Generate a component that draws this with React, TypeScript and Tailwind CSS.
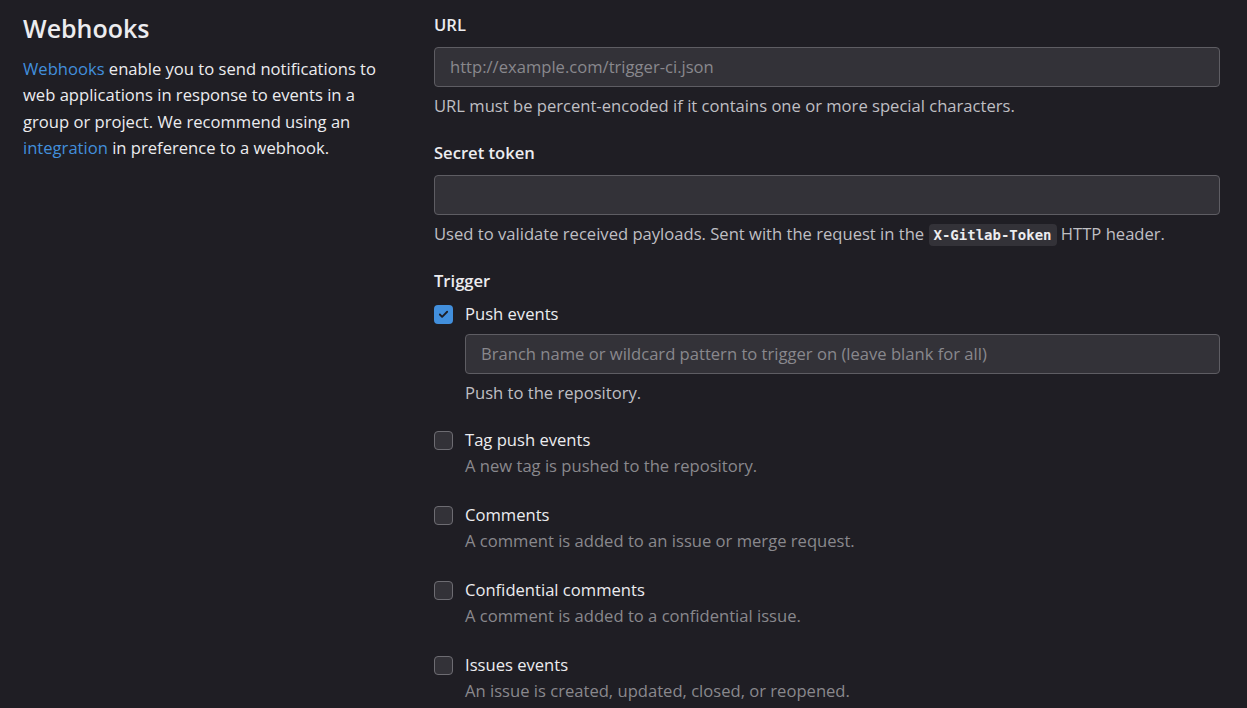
import { Check } from "lucide-react";

const events = [
  { label: "Tag push events", help: "A new tag is pushed to the repository." },
  { label: "Comments", help: "A comment is added to an issue or merge request." },
  { label: "Confidential comments", help: "A comment is added to a confidential issue." },
  { label: "Issues events", help: "An issue is created, updated, closed, or reopened." },
];

function Box({ checked }: { checked?: boolean }) {
  if (checked) {
    return (
      <span className="flex h-[19px] w-[19px] shrink-0 items-center justify-center rounded-[4px] bg-[#428fdc]">
        <Check size={11} strokeWidth={4} className="text-[#1f1e24]" />
      </span>
    );
  }
  return <span className="h-[19px] w-[19px] shrink-0 rounded-[4px] border border-[#6d6c72] bg-[#333238]" />;
}

export default function App() {
  return (
    <div
      className="flex min-h-[708px] bg-[#1f1e24] text-[16.6px] text-[#ececef]"
      style={{ fontFamily: '"Open Sans", sans-serif' }}
    >
      <div className="w-[434px] shrink-0 pl-[23px] pr-[46px] pt-[12px]">
        <h2 className="text-[25px] font-semibold leading-[32px]">Webhooks</h2>
        <p className="mt-[12px] leading-[26.4px]">
          <a className="text-[#428fdc]">Webhooks</a> enable you to send notifications to web applications in response
          to events in a group or project. We recommend using an <a className="text-[#428fdc]">integration</a> in
          preference to a webhook.
        </p>
      </div>

      <div className="mr-[27px] flex-1 pt-[12px]">
        <label className="block font-semibold leading-[26px]">URL</label>
        <div className="mt-[9px] flex h-[40px] items-center rounded-[4px] border border-[#5e5d63] bg-[#333238] px-[15px] text-[#89888d]">
          http://example.com/trigger-ci.json
        </div>
        <p className="mt-[6px] leading-[26px] text-[#bfbfc3]">
          URL must be percent-encoded if it contains one or more special characters.
        </p>

        <label className="mt-[21px] block font-semibold leading-[26px]">Secret token</label>
        <div className="mt-[9px] h-[40px] rounded-[4px] border border-[#5e5d63] bg-[#333238]" />
        <p className="mt-[6px] leading-[26px] text-[#bfbfc3]">
          Used to validate received payloads. Sent with the request in the{" "}
          <code
            className="rounded-[4px] bg-[#333238] px-[5px] py-[3px] text-[14px] font-semibold text-[#ececef]"
            style={{ fontFamily: '"DejaVu Sans Mono", monospace' }}
          >
            X-Gitlab-Token
          </code>{" "}
          HTTP header.
        </p>

        <label className="mt-[20px] block font-semibold leading-[26px]">Trigger</label>
        <div className="mt-[7px] flex items-center gap-[12px]">
          <Box checked />
          <span className="leading-[26px]">Push events</span>
        </div>
        <div className="ml-[31px]">
          <div className="mt-[7px] flex h-[40px] items-center rounded-[4px] border border-[#5e5d63] bg-[#333238] px-[15px] text-[#89888d]">
            Branch name or wildcard pattern to trigger on (leave blank for all)
          </div>
          <p className="mt-[6px] leading-[26px] text-[#bfbfc3]">Push to the repository.</p>
        </div>

        <div className="mt-[21px] flex flex-col gap-[24px]">
          {events.map((e) => (
            <div key={e.label}>
              <div className="flex items-center gap-[12px]">
                <Box />
                <span className="leading-[26px]">{e.label}</span>
              </div>
              <p className="ml-[31px] leading-[25px] text-[#89888d]">{e.help}</p>
            </div>
          ))}
        </div>
      </div>
    </div>
  );
}
